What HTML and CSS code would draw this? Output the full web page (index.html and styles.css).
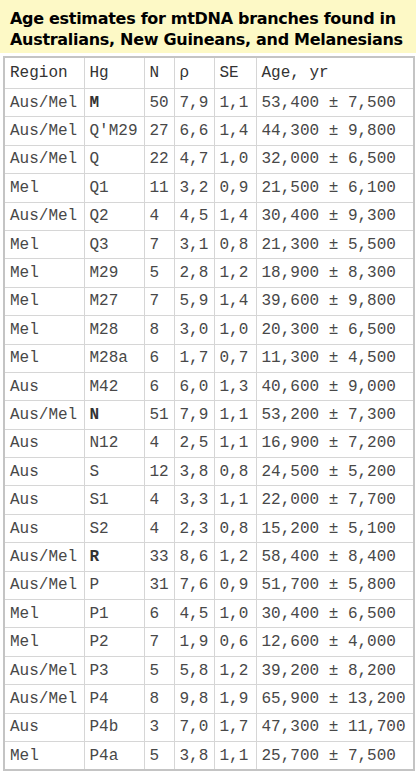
FILE: index.html
```html
<!DOCTYPE html>
<html>
<head>
<meta charset="utf-8">
<link rel="stylesheet" href="styles.css">
</head>
<body>
<div class="title">Age estimates for mtDNA branches found in<br>Australians, New Guineans, and Melanesians</div>
<table class="data">
<colgroup>
<col class="c-region"><col class="c-hg"><col class="c-n"><col class="c-rho"><col class="c-se"><col class="c-age">
</colgroup>
<thead>
<tr><th>Region</th><th>Hg</th><th>N</th><th>ρ</th><th>SE</th><th>Age, yr</th></tr>
</thead>
<tbody>
<tr><td>Aus/Mel</td><td class="b">M</td><td>50</td><td>7,9</td><td>1,1</td><td>53,400 ± 7,500</td></tr>
<tr><td>Aus/Mel</td><td>Q'M29</td><td>27</td><td>6,6</td><td>1,4</td><td>44,300 ± 9,800</td></tr>
<tr><td>Aus/Mel</td><td>Q</td><td>22</td><td>4,7</td><td>1,0</td><td>32,000 ± 6,500</td></tr>
<tr><td>Mel</td><td>Q1</td><td>11</td><td>3,2</td><td>0,9</td><td>21,500 ± 6,100</td></tr>
<tr><td>Aus/Mel</td><td>Q2</td><td>4</td><td>4,5</td><td>1,4</td><td>30,400 ± 9,300</td></tr>
<tr><td>Mel</td><td>Q3</td><td>7</td><td>3,1</td><td>0,8</td><td>21,300 ± 5,500</td></tr>
<tr><td>Mel</td><td>M29</td><td>5</td><td>2,8</td><td>1,2</td><td>18,900 ± 8,300</td></tr>
<tr><td>Mel</td><td>M27</td><td>7</td><td>5,9</td><td>1,4</td><td>39,600 ± 9,800</td></tr>
<tr><td>Mel</td><td>M28</td><td>8</td><td>3,0</td><td>1,0</td><td>20,300 ± 6,500</td></tr>
<tr><td>Mel</td><td>M28a</td><td>6</td><td>1,7</td><td>0,7</td><td>11,300 ± 4,500</td></tr>
<tr><td>Aus</td><td>M42</td><td>6</td><td>6,0</td><td>1,3</td><td>40,600 ± 9,000</td></tr>
<tr><td>Aus/Mel</td><td class="b">N</td><td>51</td><td>7,9</td><td>1,1</td><td>53,200 ± 7,300</td></tr>
<tr><td>Aus</td><td>N12</td><td>4</td><td>2,5</td><td>1,1</td><td>16,900 ± 7,200</td></tr>
<tr><td>Aus</td><td>S</td><td>12</td><td>3,8</td><td>0,8</td><td>24,500 ± 5,200</td></tr>
<tr><td>Aus</td><td>S1</td><td>4</td><td>3,3</td><td>1,1</td><td>22,000 ± 7,700</td></tr>
<tr><td>Aus</td><td>S2</td><td>4</td><td>2,3</td><td>0,8</td><td>15,200 ± 5,100</td></tr>
<tr><td>Aus/Mel</td><td class="b">R</td><td>33</td><td>8,6</td><td>1,2</td><td>58,400 ± 8,400</td></tr>
<tr><td>Aus/Mel</td><td>P</td><td>31</td><td>7,6</td><td>0,9</td><td>51,700 ± 5,800</td></tr>
<tr><td>Mel</td><td>P1</td><td>6</td><td>4,5</td><td>1,0</td><td>30,400 ± 6,500</td></tr>
<tr><td>Mel</td><td>P2</td><td>7</td><td>1,9</td><td>0,6</td><td>12,600 ± 4,000</td></tr>
<tr><td>Aus/Mel</td><td>P3</td><td>5</td><td>5,8</td><td>1,2</td><td>39,200 ± 8,200</td></tr>
<tr><td>Aus/Mel</td><td>P4</td><td>8</td><td>9,8</td><td>1,9</td><td>65,900 ± 13,200</td></tr>
<tr><td>Aus</td><td>P4b</td><td>3</td><td>7,0</td><td>1,7</td><td>47,300 ± 11,700</td></tr>
<tr><td>Mel</td><td>P4a</td><td>5</td><td>3,8</td><td>1,1</td><td>25,700 ± 7,500</td></tr>
</tbody>
</table>
</body>
</html>
```

FILE: styles.css
```css
html, body {
  margin: 0;
  padding: 0;
  background: #ffffff;
}

.title {
  background: #fdf9c6;
  font-family: "DejaVu Sans", Verdana, sans-serif;
  font-weight: bold;
  font-size: 16px;
  line-height: 21px;
  color: #000;
  padding: 8px 8px 3px 10px;
  white-space: nowrap;
  letter-spacing: -0.3px;
}

.data {
  margin: 3px 0 0 3px;
  width: 410px;
  table-layout: fixed;
  border-collapse: collapse;
  border: 2px solid #c4c4c4;
  font-family: "Liberation Mono", "Courier New", monospace;
  font-size: 16px;
  color: #484848;
}

.c-region { width: 80px; }
.c-hg { width: 60px; }
.c-n { width: 30px; }
.c-rho { width: 40px; }
.c-se { width: 42px; }
.c-age { width: 158px; }

.data th,
.data td {
  border: 1px solid #d6d6d6;
  padding: 0 0 0 5px;
  text-align: left;
  white-space: nowrap;
  overflow: hidden;
}

.data th {
  height: 30px;
  font-weight: normal;
  color: #333333;
}

.data td {
  height: 27.4px;
}

.data td.b {
  font-weight: bold;
  color: #333333;
}
```
